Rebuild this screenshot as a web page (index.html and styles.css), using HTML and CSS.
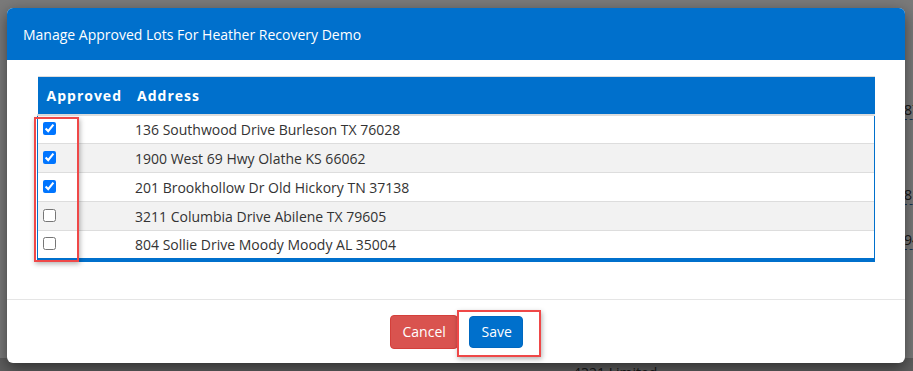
FILE: index.html
```html
<!DOCTYPE html>
<html>

<head>
    <meta charset="utf-8" />
    <title>Manage Approved Lots</title>
    <link rel="stylesheet" href="styles.css">
</head>

<body>
    <div class="page">
        <div class="page-side">
            <a class="bg-link first">87</a>
            <a class="bg-link second">81</a>
            <a class="bg-link third">94</a>
        </div>
        <div class="page-bottom">
            <span class="bg-text">4321 Limited</span>
        </div>
    </div>
    <div class="backdrop"></div>

    <div class="modal">
        <div class="modal-header">
            <h4 class="modal-title">Manage Approved Lots For Heather Recovery Demo</h4>
        </div>
        <div class="modal-body">
            <table class="lots">
                <thead>
                    <tr>
                        <th class="col-check">Approved</th>
                        <th>Address</th>
                    </tr>
                </thead>
                <tbody>
                    <tr>
                        <td class="col-check"><input type="checkbox" checked></td>
                        <td>136 Southwood Drive Burleson TX 76028</td>
                    </tr>
                    <tr>
                        <td class="col-check"><input type="checkbox" checked></td>
                        <td>1900 West 69 Hwy Olathe KS 66062</td>
                    </tr>
                    <tr>
                        <td class="col-check"><input type="checkbox" checked></td>
                        <td>201 Brookhollow Dr Old Hickory TN 37138</td>
                    </tr>
                    <tr>
                        <td class="col-check"><input type="checkbox"></td>
                        <td>3211 Columbia Drive Abilene TX 79605</td>
                    </tr>
                    <tr>
                        <td class="col-check"><input type="checkbox"></td>
                        <td>804 Sollie Drive Moody Moody AL 35004</td>
                    </tr>
                </tbody>
            </table>
        </div>
        <div class="modal-footer">
            <button class="btn btn-cancel">Cancel</button>
            <button class="btn btn-save">Save</button>
        </div>

        <!-- annotation boxes -->
        <div class="mark mark-checks"></div>
        <div class="mark mark-save"></div>
    </div>
</body>

</html>
```

FILE: styles.css
```css
* {
    margin: 0;
    padding: 0;
    box-sizing: border-box;
}

body {
    width: 913px;
    height: 371px;
    overflow: hidden;
    position: relative;
    font-family: "Open Sans", "Liberation Sans", sans-serif;
    background: #f4f4f4;
}

/* page behind the dialog */
.page {
    display: grid;
    grid-template-rows: 358px 13px;
    height: 371px;
}

.page-side {
    padding-left: 904px;
    padding-top: 101px;
    display: flex;
    flex-direction: column;
}

.bg-link {
    font-size: 14px;
    line-height: 18px;
    color: #333;
    border-bottom: 1px dashed #2a6fb0;
    white-space: nowrap;
    width: 20px;
}

.bg-link.second {
    margin-top: 66px;
}

.bg-link.third {
    margin-top: 26px;
}

.page-bottom {
    padding-left: 573px;
    padding-top: 3px;
    background: #bdbdbd;
}

.bg-text {
    font-size: 14px;
    line-height: 16px;
    color: #333;
}

.backdrop {
    position: absolute;
    left: 0;
    top: 0;
    width: 913px;
    height: 371px;
    background: rgba(0, 0, 0, 0.5);
}

/* dialog */
.modal {
    position: absolute;
    left: 7px;
    top: 8px;
    width: 898px;
    height: 355px;
    background: #fff;
    border-radius: 6px;
    box-shadow: 0 5px 15px rgba(0, 0, 0, 0.5);
}

.modal-header {
    height: 52px;
    background: #0070cc;
    border-radius: 6px 6px 0 0;
    padding: 0 16px;
    display: flex;
    align-items: center;
}

.modal-title {
    color: #fff;
    font-size: 14px;
    font-weight: normal;
}

.modal-body {
    padding: 16px 30px 37px;
}

.lots {
    width: 100%;
    border-collapse: collapse;
    font-size: 14px;
    color: #333;
    border-top: 1px solid #ddd;
    border-bottom: 4px solid #0070cc;
}

.lots th {
    height: 38px;
    background: #0070cc;
    color: #fff;
    text-align: left;
    font-size: 14px;
    font-weight: bold;
    letter-spacing: 1px;
    padding: 0 8px 0 7px;
    border-bottom: 2px solid #ddd;
}

.lots th.col-check {
    width: 91px;
    padding-left: 9px;
}

.lots td {
    height: 29px;
    padding: 0 8px 0 6px;
    border-top: 1px solid #ddd;
    vertical-align: middle;
}

.lots td.col-check {
    border-left: 1px solid #0070cc;
    padding: 0 0 1px 1px;
}

.lots td:last-child {
    border-right: 1px solid #0070cc;
    padding-left: 5px;
}

.lots tbody tr:nth-child(even) td {
    background: #f2f2f2;
}

.lots input {
    display: block;
    width: 13px;
    height: 13px;
    margin: 0 0 0 4px;
    accent-color: #0075ff;
}

.modal-footer {
    border-top: 1px solid #e5e5e5;
    height: 63px;
    padding-top: 15px;
    display: flex;
    justify-content: center;
    align-items: flex-start;
    gap: 11px;
}

.btn {
    font-family: "Open Sans", "Liberation Sans", sans-serif;
    font-size: 14px;
    color: #fff;
    border: 1px solid transparent;
    border-radius: 4px;
    height: 34px;
    padding: 0 12px;
    cursor: pointer;
}

.btn-cancel {
    width: 68px;
    background: #d9534f;
    border-color: #d43f3a;
}

.btn-save {
    width: 54px;
    height: 32px;
    margin-top: 1px;
    background: #0070cc;
    border-color: #0068c0;
}

/* red highlight boxes */
.mark {
    position: absolute;
    border: 2px solid #ef4848;
    box-shadow: 1px 2px 5px rgba(0, 0, 0, 0.3);
}

.mark-checks {
    left: 27px;
    top: 109px;
    width: 45px;
    height: 145px;
}

.mark-save {
    left: 450px;
    top: 302px;
    width: 84px;
    height: 47px;
}
```
